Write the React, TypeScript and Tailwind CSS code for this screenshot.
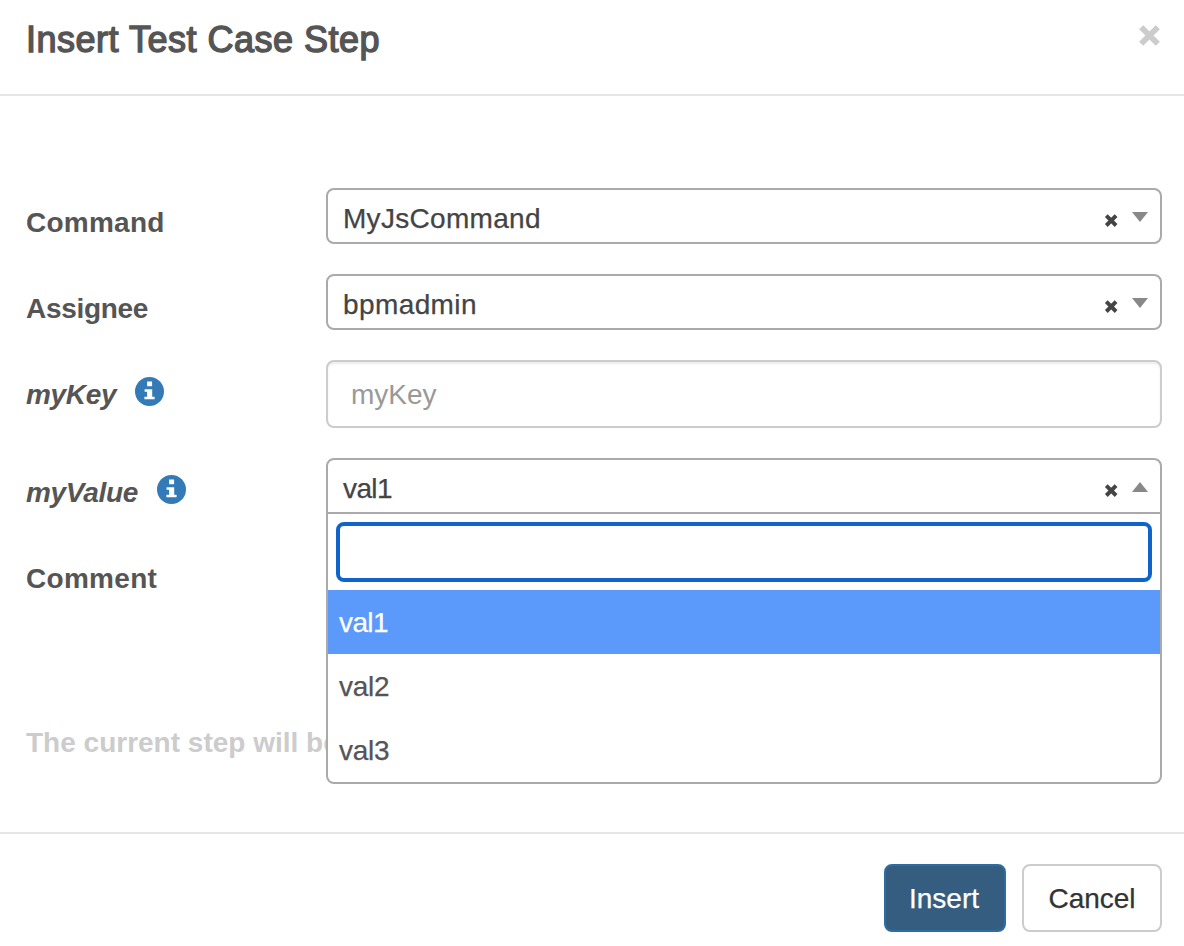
import React from "react";

function InfoIcon() {
  return (
    <svg className="h-[29px] w-[29px]" viewBox="0 0 29 29" aria-hidden="true">
      <circle cx="14.5" cy="14.5" r="14.5" fill="#337ab7" />
      <path fill="#fff" d="M12.1 4.4h5v4.9h-5zM9.6 12.2h7.6v7.6h2.4v2.5H9.4v-2.5h2.7v-5.1H9.6z" />
    </svg>
  );
}

function ClearIcon() {
  return (
    <svg className="h-[14px] w-[14px]" viewBox="0 0 14 14" aria-hidden="true">
      <path d="M2.3 1.7l9.8 9.8M12.1 1.7l-9.8 9.8" stroke="#444" strokeWidth="3.9" fill="none" />
    </svg>
  );
}

function Arrow({ open = false }: { open?: boolean }) {
  return (
    <svg className="h-[10px] w-4" viewBox="0 0 16 10" aria-hidden="true">
      <path d={open ? "M0 10L8 0L16 10z" : "M0 0L8 10L16 0z"} fill="#888" />
    </svg>
  );
}

function Label({
  children,
  info = false,
  tracking,
}: {
  children: React.ReactNode;
  info?: boolean;
  tracking: string;
}) {
  return (
    <div className={info ? "flex w-[300px] shrink-0 items-start pt-[15px] italic" : "flex w-[300px] shrink-0 items-start pt-[15px]"}>
      <span className={`font-bold leading-[40px] ${tracking}`}>{children}</span>
      {info && (
        <span className="ml-[19px] mt-[1.5px]">
          <InfoIcon />
        </span>
      )}
    </div>
  );
}

function Select({ value, tracking, open = false }: { value: string; tracking: string; open?: boolean }) {
  return (
    <div
      className={
        open
          ? "flex h-14 w-full items-start rounded-t-lg border-2 border-[#aaa] bg-white pl-[15px] pr-3 text-[#444]"
          : "flex h-14 w-full items-start rounded-lg border-2 border-[#aaa] bg-white pl-[15px] pr-3 text-[#444]"
      }
    >
      <span className={`grow leading-[58px] [-webkit-text-stroke:0.25px_currentColor] ${tracking}`}>{value}</span>
      <span className="mt-[24px] mr-[14px]">
        <ClearIcon />
      </span>
      <span className="mt-[22px]">
        <Arrow open={open} />
      </span>
    </div>
  );
}

export default function App() {
  return (
    <div className="h-[946px] w-[1184px] overflow-hidden bg-white font-['Liberation_Sans',Arial,sans-serif] text-[28px] text-[#555]">
      <header className="flex h-24 items-start justify-between border-b-2 border-[#e5e5e5] pl-[26px] pr-6">
        <h1 className="pt-[14px] text-[36px] font-normal leading-[52px] tracking-[0.5px] [-webkit-text-stroke:1.4px_#555]">
          Insert Test Case Step
        </h1>
        <button aria-label="Close" className="mt-[25px]">
          <svg className="h-[21px] w-[21px]" viewBox="0 0 21 21">
            <path d="M2.2 2.2l16.6 16.6M18.8 2.2L2.2 18.8" stroke="#ccc" strokeWidth="5.8" fill="none" />
          </svg>
        </button>
      </header>

      <main className="flex h-[736px] flex-col gap-[30px] pl-[26px] pr-[22px] pt-[92px]">
        <div className="flex h-14">
          <Label tracking="tracking-[0.25px]">Command</Label>
          <Select value="MyJsCommand" tracking="tracking-[0.3px]" />
        </div>
        <div className="flex h-14">
          <Label tracking="tracking-[-0.3px]">Assignee</Label>
          <Select value="bpmadmin" tracking="tracking-[0.4px]" />
        </div>
        <div className="flex h-[68px]">
          <Label info tracking="tracking-[-0.3px]">myKey</Label>
          <input
            placeholder="myKey"
            className="h-[68px] w-full rounded-lg border-2 border-[#ccc] pl-[23px] pt-[2px] shadow-[inset_0_2px_2px_rgba(0,0,0,0.075)] placeholder:text-[#999]"
          />
        </div>
        <div className="flex h-14">
          <Label info tracking="tracking-[-0.3px]">myValue</Label>
          <div className="relative w-full">
            <Select value="val1" tracking="tracking-[-0.6px]" open />
            <div className="absolute left-0 top-[56px] h-[270px] w-full overflow-hidden rounded-b-lg border-2 border-t-0 border-[#aaa] bg-white">
              <div className="p-2">
                <div className="h-[60px] rounded-lg border-4 border-[#1163cc]" />
              </div>
              <ul className="leading-[66px] tracking-[-0.3px] [-webkit-text-stroke:0.25px_currentColor]">
                <li className="h-16 bg-[#5b99fb] pl-[11px] tracking-[-0.6px] text-white">val1</li>
                <li className="h-16 pl-[11px]">val2</li>
                <li className="h-16 pl-[11px]">val3</li>
              </ul>
            </div>
          </div>
        </div>
        <div className="flex h-[149px] shrink-0">
          <Label tracking="tracking-[0.3px]">Comment</Label>
        </div>
        <p className="w-[300px] shrink-0 whitespace-nowrap font-bold leading-[40px] text-[#ccc]">
          The current step will be
        </p>
      </main>

      <footer className="flex justify-end gap-4 border-t-2 border-[#e5e5e5] pr-[22px] pt-[30px] [-webkit-text-stroke:0.25px_currentColor]">
        <button className="h-[68px] w-[122px] rounded-lg border-2 border-[#2e6da4] bg-[#355d80] pr-[8px] pl-[6px] pt-[2px] text-white">
          Insert
        </button>
        <button className="h-[68px] w-[140px] rounded-lg border-2 border-[#ccc] bg-white pt-[2px] text-[#333]">Cancel</button>
      </footer>
    </div>
  );
}
